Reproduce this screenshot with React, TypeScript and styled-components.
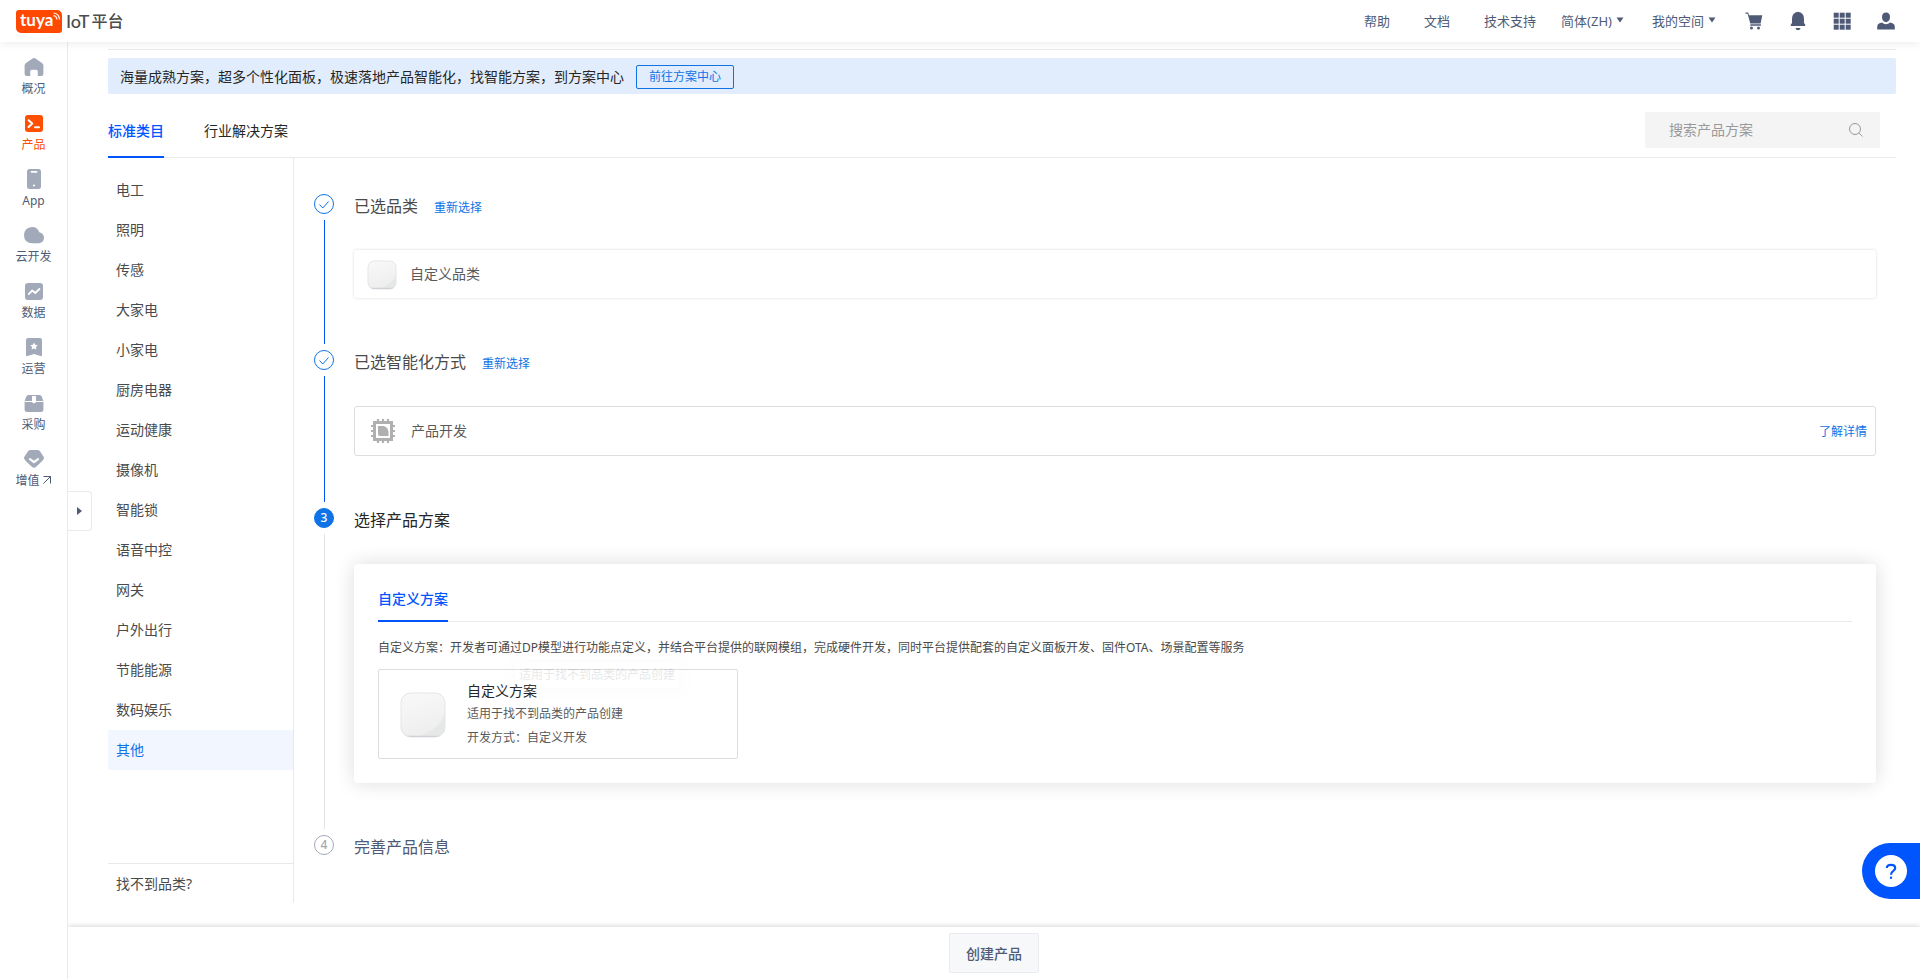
import React from "react";
import styled, { createGlobalStyle } from "styled-components";

const GlobalStyle = createGlobalStyle`
  *, *::before, *::after { box-sizing: border-box; }
  body {
    margin: 0;
    background: #fff;
    color: #4a4a4a;
    font-family: "Noto Sans", "Noto Sans CJK SC", sans-serif;
    font-size: 14px;
  }
  a { color: inherit; text-decoration: none; }
  button { font-family: inherit; padding: 0; cursor: pointer; }
  h1, h2, p, ul, ol { margin: 0; padding: 0; font-weight: 400; list-style: none; }
  svg { display: block; flex: none; }
`;

const blue = "#0055ff";
const link = "#0f73e6";
const slate = "#4f5b76";
const line = "#e9e9eb";

const Page = styled.div`
  min-height: 100vh;
  display: flex;
  flex-direction: column;
`;

/* ---------- header ---------- */

const Header = styled.header`
  position: sticky;
  top: 0;
  z-index: 4;
  height: 42px;
  flex: none;
  display: flex;
  align-items: center;
  justify-content: space-between;
  padding: 0 24px 0 16px;
  background: #fff;
  box-shadow: 0 2px 8px rgba(0, 0, 0, 0.07);
`;

const Logo = styled.a`
  display: flex;
  align-items: center;
  gap: 4px;
  color: #4c4c4c;
  font-size: 16px;
  line-height: 24px;
`;

const LogoMark = styled.span`
  position: relative;
  width: 46px;
  height: 23px;
  padding-left: 4px;
  border-radius: 3px 5px 3px 5px;
  background: #ff4800;
  color: #fff;
  font-family: Lato, sans-serif;
  font-weight: 700;
  font-size: 17px;
  line-height: 20px;

  svg {
    position: absolute;
    top: 2px;
    right: 1px;
  }
`;

const LogoText = styled.span`
  display: flex;
  gap: 2px;
  font-weight: 500;
`;

const LogoLatin = styled.span`
  font-family: Lato, sans-serif;
  font-size: 18px;
`;

const HeaderNav = styled.nav`
  display: flex;
  align-items: center;
  color: ${slate};
  font-size: 13px;
`;

const HeaderLinks = styled.div`
  display: flex;
  gap: 34px;
  margin-right: 25px;
  padding-bottom: 2px;
`;

const HeaderMenus = styled.div`
  display: flex;
  gap: 28px;
  margin-right: 28px;
  padding-bottom: 2px;
`;

const MenuButton = styled.button`
  display: flex;
  align-items: center;
  gap: 4px;
  border: 0;
  background: none;
  color: inherit;
  font-size: 13px;
`;

const HeaderIcons = styled.div`
  display: flex;
  gap: 24px;
`;

const IconButton = styled.button`
  border: 0;
  background: none;
  color: ${slate};
`;

/* ---------- side navigation ---------- */

const Body = styled.div`
  flex: 1;
  display: flex;
`;

const Side = styled.nav`
  position: relative;
  z-index: 3;
  width: 68px;
  flex: none;
  padding-top: 7px;
  border-right: 1px solid #e8e9f1;
  background: #fff;
`;

const SideItem = styled.a<{ $active?: boolean }>`
  display: flex;
  flex-direction: column;
  align-items: center;
  gap: 4px;
  padding: 8px 0;
  font-size: 12px;
  line-height: 16px;
  color: ${(p) => (p.$active ? "#ff4f00" : slate)};

  > svg { color: ${(p) => (p.$active ? "#ff4f00" : "#a2a9b8")}; }
`;

const SideLabel = styled.span`
  display: flex;
  align-items: center;
  gap: 2px;
`;

const Main = styled.main`
  flex: 1;
  min-width: 0;
  display: flex;
  flex-direction: column;
`;

const Expander = styled.button`
  position: fixed;
  z-index: 1;
  left: 68px;
  top: 491px;
  width: 24px;
  height: 40px;
  display: flex;
  align-items: center;
  justify-content: center;
  border: 1px solid #e8e9f1;
  border-left: 0;
  border-radius: 0 4px 4px 0;
  background: #fff;
  color: ${slate};
`;

const Content = styled.div`
  flex: 1;
  display: flex;
  flex-direction: column;
  margin: 7px 24px 24px 40px;
  padding-top: 8px;
  border-top: 1px solid ${line};
`;

const Banner = styled.div`
  height: 36px;
  display: flex;
  align-items: center;
  gap: 12px;
  padding: 0 12px;
  border-radius: 2px;
  background: #e1edfc;
  color: #262626;
`;

const BannerButton = styled.button`
  height: 24px;
  margin-top: 2px;
  padding: 0 12px;
  border: 1px solid ${link};
  border-radius: 2px;
  background: none;
  color: ${link};
  font-size: 12px;
  line-height: 20px;
`;

const TabBar = styled.div`
  height: 64px;
  display: flex;
  align-items: flex-end;
  justify-content: space-between;
  border-bottom: 1px solid ${line};
`;

const Tabs = styled.div`
  display: flex;
  gap: 40px;
`;

const Tab = styled.button<{ $active?: boolean; $compact?: boolean }>`
  margin-bottom: -1px;
  border: 0;
  border-bottom: 2px solid ${(p) => (p.$active ? blue : "transparent")};
  background: none;
  color: ${(p) => (p.$active ? blue : "#262626")};
  font-size: 14px;
  font-weight: ${(p) => (p.$active ? 500 : 400)};
  line-height: ${(p) => (p.$compact ? 42 : 50)}px;
`;

const Search = styled.label`
  width: 235px;
  height: 36px;
  display: flex;
  align-items: center;
  margin: 0 16px 9px 0;
  padding: 0 16px 0 24px;
  border-radius: 2px;
  background: #f4f4f4;
  color: #999;
`;

const SearchInput = styled.input`
  flex: 1;
  min-width: 0;
  padding: 0 0 2px;
  border: 0;
  outline: 0;
  background: none;
  color: #333;
  font: inherit;

  &::placeholder { color: #999; opacity: 1; }
`;

/* ---------- categories ---------- */

const Workspace = styled.div`
  flex: 1;
  display: flex;
`;

const Categories = styled.aside`
  width: 186px;
  flex: none;
  display: flex;
  flex-direction: column;
  justify-content: space-between;
  padding-top: 12px;
  border-right: 1px solid ${line};
`;

const Category = styled.a<{ $active?: boolean }>`
  display: block;
  padding: 0 8px;
  line-height: 40px;
  color: ${(p) => (p.$active ? link : "#4a4a4a")};
  background: ${(p) => (p.$active ? "#f2f7ff" : "none")};
`;

const Missing = styled.a`
  height: 40px;
  padding: 0 8px;
  border-top: 1px solid ${line};
  line-height: 40px;
`;

/* ---------- steps ---------- */

const Steps = styled.ol`
  flex: 1;
  min-width: 0;
  && { padding: 36px 20px 0; }
`;

const StepRow = styled.li`
  display: flex;
  gap: 20px;
`;

const Rail = styled.div`
  width: 20px;
  flex: none;
  display: flex;
  flex-direction: column;
`;

type Status = "done" | "current" | "waiting";

const Dot = styled.span<{ $status: Status }>`
  width: 20px;
  height: 20px;
  display: flex;
  align-items: center;
  justify-content: center;
  border: 1px solid ${(p) => (p.$status === "waiting" ? "#a2a9b8" : link)};
  border-radius: 50%;
  background: ${(p) => (p.$status === "current" ? link : "#fff")};
  color: ${(p) => ({ done: link, current: "#fff", waiting: "#a2a9b8" })[p.$status]};
  font-size: 12px;
  font-weight: 500;
  line-height: 18px;
`;

const Connector = styled.span<{ $done: boolean }>`
  flex: 1;
  width: 1px;
  margin: 6px 0 6px 10px;
  background: ${(p) => (p.$done ? blue : "#e4e4e6")};
`;

const StepBody = styled.div<{ $last: boolean }>`
  flex: 1;
  min-width: 0;
  padding-bottom: ${(p) => (p.$last ? 0 : 52)}px;
`;

const StepHead = styled.div<{ $last: boolean }>`
  height: 26px;
  display: flex;
  align-items: baseline;
  gap: 16px;
  margin-bottom: ${(p) => (p.$last ? 0 : 30)}px;
  line-height: 24px;
`;

const StepTitle = styled.h2<{ $status: Status }>`
  font-size: 16px;
  color: ${(p) => ({ done: "#4a4a4a", current: "#262626", waiting: slate })[p.$status]};
`;

const TextLink = styled.a`
  color: ${link};
  font-size: 12px;
`;

const Choice = styled.div<{ $outlined?: boolean }>`
  height: ${(p) => (p.$outlined ? 50 : 48)}px;
  display: flex;
  align-items: center;
  gap: 12px;
  padding: 0 8px 0 12px;
  border: ${(p) => (p.$outlined ? "1px solid #dedede" : "0")};
  border-radius: 3px;
  box-shadow: ${(p) => (p.$outlined ? "none" : "0 0 3px rgba(0, 0, 0, 0.16)")};
`;

const ChoiceName = styled.span`
  flex: 1;
  padding-bottom: 2px;
  color: #5a5a5a;
`;

const Panel = styled.section`
  padding: 0 24px 24px;
  border-radius: 4px;
  background: #fff;
  box-shadow: 0 0 20px rgba(0, 0, 0, 0.14);
`;

const PanelTabs = styled.div`
  height: 58px;
  display: flex;
  align-items: flex-end;
  border-bottom: 1px solid ${line};
`;

const PanelText = styled.p`
  && { padding: 15px 0 10px; }
  color: #4a4a4a;
  font-size: 12px;
  line-height: 22px;
`;

const Solution = styled.button`
  position: relative;
  width: 360px;
  height: 90px;
  display: flex;
  align-items: center;
  gap: 20px;
  padding: 0 20px;
  border: 1px solid #dcdddf;
  border-radius: 2px;
  background: #fff;
  text-align: left;
`;

const SolutionInfo = styled.span`
  display: flex;
  flex-direction: column;
  padding-top: 2px;
  color: #5a5a5a;
  font-size: 12px;
  line-height: 24px;
`;

const SolutionName = styled.span`
  color: #262626;
  font-size: 14px;
  line-height: 22px;
`;

const FadingTip = styled.span`
  position: absolute;
  left: 136px;
  top: -8px;
  padding: 0 4px;
  border-radius: 2px;
  background: #fff;
  box-shadow: 0 2px 12px rgba(0, 0, 0, 0.15);
  color: #222;
  font-size: 12px;
  line-height: 26px;
  opacity: 0.1;
`;

/* ---------- footer ---------- */

const Footer = styled.footer`
  position: sticky;
  bottom: 0;
  z-index: 2;
  height: 52px;
  flex: none;
  display: flex;
  align-items: center;
  justify-content: center;
  background: #fff;
  box-shadow: 0 -1px 5px rgba(0, 0, 0, 0.16);
`;

const CreateButton = styled.button`
  width: 90px;
  height: 40px;
  border: 1px solid #e9ebef;
  border-radius: 2px;
  background: #f7f8fa;
  color: ${slate};
  font-size: 14px;
  font-weight: 500;
`;

const HelpButton = styled.button`
  position: fixed;
  z-index: 4;
  right: 0;
  bottom: 80px;
  width: 58px;
  height: 56px;
  padding-left: 13px;
  border: 0;
  border-radius: 28px 0 0 28px;
  background: ${blue};
`;

/* ---------- icons ---------- */

const Glyph = ({ children, size = 20 }: { children: React.ReactNode; size?: number }) => (
  <svg width={size} height={size} viewBox={`0 0 ${size} ${size}`} fill="currentColor" aria-hidden="true">
    {children}
  </svg>
);

const stroke = { fill: "none", stroke: "#fff", strokeWidth: 1.8, strokeLinecap: "round", strokeLinejoin: "round" } as const;

const Caret = () => (
  <svg width="8" height="6" viewBox="0 0 8 6" fill="currentColor" aria-hidden="true">
    <path d="M.5 .5h7L4 5.5z" />
  </svg>
);

const HomeIcon = () => (
  <Glyph>
    <path d="M8.6 1.5Q10 .6 11.4 1.5l6.6 4.4q1.4 1 1.4 2.6v8.2q0 2.300-2.300 2.300h-3.300v-4.400q0-1.800-1.800-1.800H8q-1.800 0-1.800 1.800V19H2.900Q.6 19 .6 16.700V8.500q0-1.600 1.400-2.600z" />
  </Glyph>
);
const ProductIcon = () => (
  <Glyph>
    <rect x="1" y="2" width="18" height="17" rx="3" />
    <path {...stroke} strokeWidth="2" d="M4.600 7.200 8.200 10.600 4.600 14M11 14.200h4" />
  </Glyph>
);
const PhoneIcon = () => (
  <Glyph>
    <rect x="3" y="0" width="14" height="20" rx="2.500" />
    <path {...stroke} d="M7.500 2.800h5" />
    <circle cx="10" cy="16.500" r="1.100" fill="#fff" />
  </Glyph>
);
const CloudIcon = () => (
  <Glyph>
    <path d="M8 2Q13.500 2 15.300 7.200 20 8.300 20 13q-.3 5-5.300 5.300H8.500Q0 18 0 10 .5 2.500 8 2z" />
  </Glyph>
);
const DataIcon = () => (
  <Glyph>
    <rect x="1" y="2" width="18" height="17" rx="3" />
    <path {...stroke} d="M4.800 13 8.300 9.500 11.300 12 15.400 8" />
  </Glyph>
);
const OpsIcon = () => (
  <Glyph>
    <path d="M4.200 1h11.600q2.200 0 2.200 2.200V18q0 1.500-1.500 1L10 17l-6.500 2Q2 19.500 2 18V3.200Q2 1 4.200 1z" />
    <path fill="#fff" d="M10 5.400l1.200 2.400 2.600.4-1.900 1.800.5 2.600L10 11.400l-2.400 1.200.5-2.600-1.900-1.800 2.600-.4z" />
  </Glyph>
);
const BoxIcon = () => (
  <Glyph>
    <path d="M4.500 2h11q1.500 0 2.200 1.500l1.700 4.600V16.500q0 2.500-2.500 2.500H3.100Q.6 19 .6 16.500V8.100L2.300 3.500Q3 2 4.500 2z" />
    <path stroke="#fff" strokeWidth="1" d="M.6 8.500h18.800" />
    <path fill="#fff" d="M8 3h4v6.200l-2 1.300-2-1.300z" />
  </Glyph>
);
const ValueIcon = () => (
  <Glyph>
    <path d="M6.500 1h7q1.400 0 2.300 1l3.800 5.800q.8 1.400-.2 2.700-1 1.300-2.800 3l-4.400 4.300q-2.200 1.700-4.400 0L3.400 13.500Q1.600 11.800.6 10.500-.4 9.200.4 7.800L4.200 2Q5.100 1 6.500 1z" />
    <path {...stroke} strokeWidth="2.200" d="M6 10.200l4 3 4-3" />
  </Glyph>
);
const OutArrow = () => (
  <svg width="10" height="12" viewBox="0 0 10 12" fill="none" stroke="currentColor" aria-hidden="true">
    <path d="M1.500 1.500h7v7M8.500 1.500l-7 7" />
  </svg>
);

const CartIcon = () => (
  <Glyph>
    <path d="M1.500 1.500h2.700l.8 2.800h13.300l-1.700 8.200H6.300L3.600 2.800H1.500zM6.300 13.300h10.600v1.400H6.300z" />
    <circle cx="7.500" cy="17" r="1.500" />
    <circle cx="14.500" cy="17" r="1.500" />
  </Glyph>
);
const BellIcon = () => (
  <Glyph>
    <path d="M10 .8Q16 1.500 16 8v4l1.200 1.400v1.600H2.800v-1.600L4 12V8Q4 1.500 10 .8zM7.400 17h5.200q-.6 2.200-2.600 2.200T7.400 17z" />
  </Glyph>
);
const GridIcon = () => (
  <Glyph>
    {[2, 8, 14].map((y) => [2, 8, 14].map((x) => <rect key={`${x}-${y}`} x={x - 0.3} y={y - 0.3} width="5" height="5" />))}
  </Glyph>
);
const UserIcon = () => (
  <Glyph>
    <path d="M10 1.500q4 0 4 4.500t-4 5.200Q6 10.500 6 6t4-4.500zM1.200 18.500v-3q0-2.500 2.300-3.300l2.500-.6q1.500 1.700 4 1.700t4-1.700l2.500.6q2.300.8 2.300 3.300v3z" />
  </Glyph>
);

const SearchIcon = () => (
  <svg width="16" height="16" viewBox="0 0 16 16" fill="none" stroke="currentColor" aria-hidden="true">
    <circle cx="7" cy="7" r="5.500" />
    <path d="M11 11l3.500 3.500" />
  </svg>
);

const Check = () => (
  <svg width="12" height="12" viewBox="0 0 12 12" fill="none" stroke="currentColor" aria-hidden="true">
    <path d="M1.500 6.500 4.800 10 10.500 3.500" />
  </svg>
);

const TileIcon = ({ size, inset, id }: { size: number; inset: number; id: string }) => {
  const side = size - inset * 2;
  const y = inset + 1;
  return (
    <svg width={size} height={size} viewBox={`0 0 ${size} ${size}`} aria-hidden="true">
      <defs>
        <linearGradient id={id} x1="0" y1="0" x2="0.300" y2="1">
          <stop offset="0" stopColor="#f9f9f9" />
          <stop offset="1" stopColor="#eeeeef" />
        </linearGradient>
        <clipPath id={`${id}-clip`}>
          <rect x={inset} y={y} width={side} height={side} rx={side / 4.5} />
        </clipPath>
      </defs>
      <rect x={inset} y={y} width={side} height={side} rx={side / 4.5} fill={`url(#${id})`} stroke="#e4e5e8" />
      <g clipPath={`url(#${id}-clip)`}>
        <path
          d={`M${size} ${size * 0.35}Q${size * 0.9} ${size * 0.85} ${size * 0.3} ${size}H${size}z`}
          fill="#e3e6e6"
          opacity="0.8"
        />
        <path d={`M0 ${size - inset + 0.5}H${size}`} stroke="#cfd1d6" strokeWidth="1.5" />
      </g>
    </svg>
  );
};

const ChipIcon = () => (
  <svg width="32" height="32" viewBox="0 0 32 32" aria-hidden="true">
    <path d="M11 4v3M16 4v3M21 4v3M11 25v3M16 25v3M21 25v3M4 11h3M4 16h3M4 21h3M25 11h3M25 16h3M25 21h3" stroke="#b0b0b0" strokeWidth="2.200" />
    <rect x="7.500" y="7.500" width="17" height="17" fill="#fff" stroke="#b0b0b0" strokeWidth="3" />
    <path d="M11 11h5.500q4.500 1 5 6v4H13q-2 0-2-2z" fill="#b0b0b0" />
  </svg>
);

const HelpIcon = () => (
  <svg width="32" height="32" viewBox="0 0 32 32" aria-hidden="true">
    <circle cx="16" cy="16" r="16" fill="#fff" />
    <path d="M11.800 13q0-3.200 4.200-3.200 4.200 0 4.200 3.200 0 1.600-2.100 3.100Q16 17.500 16 19.800" fill="none" stroke={blue} strokeWidth="2.200" />
    <rect x="14.900" y="21.600" width="2.200" height="2.200" fill={blue} />
  </svg>
);

/* ---------- data ---------- */

const sideItems = [
  { label: "概况", Icon: HomeIcon },
  { label: "产品", Icon: ProductIcon, active: true },
  { label: "App", Icon: PhoneIcon },
  { label: "云开发", Icon: CloudIcon },
  { label: "数据", Icon: DataIcon },
  { label: "运营", Icon: OpsIcon },
  { label: "采购", Icon: BoxIcon },
  { label: "增值", Icon: ValueIcon, external: true },
];

const categories = [
  "电工", "照明", "传感", "大家电", "小家电", "厨房电器", "运动健康", "摄像机",
  "智能锁", "语音中控", "网关", "户外出行", "节能能源", "数码娱乐", "其他",
];

const headerIcons = [
  { name: "购物车", Icon: CartIcon },
  { name: "消息", Icon: BellIcon },
  { name: "应用", Icon: GridIcon },
  { name: "账号", Icon: UserIcon },
];

interface StepProps {
  index: number;
  title: string;
  status: Status;
  reselect?: boolean;
  last?: boolean;
  children?: React.ReactNode;
}

const Step = ({ index, title, status, reselect, last = false, children }: StepProps) => (
  <StepRow>
    <Rail>
      <Dot $status={status}>{status === "done" ? <Check /> : index}</Dot>
      {!last && <Connector $done={status === "done"} />}
    </Rail>
    <StepBody $last={last}>
      <StepHead $last={last}>
        <StepTitle $status={status}>{title}</StepTitle>
        {reselect && <TextLink href="#">重新选择</TextLink>}
      </StepHead>
      {children}
    </StepBody>
  </StepRow>
);

export default function App() {
  return (
    <Page>
      <GlobalStyle />
      <Header>
        <Logo href="#">
          <LogoMark>
            tuya
            <svg width="9" height="9" viewBox="0 0 9 9" fill="none" stroke="#fff" strokeWidth="1.200" aria-hidden="true">
              <path d="M1.500 1Q7 1.500 7.500 7.500M1.500 3.600Q4.600 4 5 7.500" />
            </svg>
          </LogoMark>
          <LogoText>
            <LogoLatin>IoT</LogoLatin>
            <span>平台</span>
          </LogoText>
        </Logo>
        <HeaderNav>
          <HeaderLinks>
            <a href="#">帮助</a>
            <a href="#">文档</a>
            <a href="#">技术支持</a>
          </HeaderLinks>
          <HeaderMenus>
            <MenuButton>简体(ZH)<Caret /></MenuButton>
            <MenuButton>我的空间<Caret /></MenuButton>
          </HeaderMenus>
          <HeaderIcons>
            {headerIcons.map(({ name, Icon }) => (
              <IconButton key={name} aria-label={name}><Icon /></IconButton>
            ))}
          </HeaderIcons>
        </HeaderNav>
      </Header>

      <Body>
        <Side>
          {sideItems.map(({ label, Icon, active, external }) => (
            <SideItem key={label} href="#" $active={active}>
              <Icon />
              <SideLabel>{label}{external && <OutArrow />}</SideLabel>
            </SideItem>
          ))}
        </Side>
        <Expander aria-label="展开">
          <svg width="5" height="8" viewBox="0 0 5 8" fill="currentColor" aria-hidden="true"><path d="M0 0l5 4-5 4z" /></svg>
        </Expander>

        <Main>
          <Content>
            <Banner>
              <span>海量成熟方案，超多个性化面板，极速落地产品智能化，找智能方案，到方案中心</span>
              <BannerButton>前往方案中心</BannerButton>
            </Banner>
            <TabBar>
              <Tabs>
                <Tab $active>标准类目</Tab>
                <Tab>行业解决方案</Tab>
              </Tabs>
              <Search>
                <SearchInput type="text" placeholder="搜索产品方案" aria-label="搜索产品方案" />
                <SearchIcon />
              </Search>
            </TabBar>

            <Workspace>
              <Categories>
                <ul>
                  {categories.map((name) => (
                    <li key={name}><Category href="#" $active={name === "其他"}>{name}</Category></li>
                  ))}
                </ul>
                <Missing href="#">找不到品类?</Missing>
              </Categories>

              <Steps>
                <Step index={1} title="已选品类" status="done" reselect>
                  <Choice>
                    <TileIcon size={32} inset={2} id="tile-small" />
                    <ChoiceName>自定义品类</ChoiceName>
                  </Choice>
                </Step>
                <Step index={2} title="已选智能化方式" status="done" reselect>
                  <Choice $outlined>
                    <ChipIcon />
                    <ChoiceName>产品开发</ChoiceName>
                    <TextLink href="#">了解详情</TextLink>
                  </Choice>
                </Step>
                <Step index={3} title="选择产品方案" status="current">
                  <Panel>
                    <PanelTabs><Tab $active $compact>自定义方案</Tab></PanelTabs>
                    <PanelText>
                      自定义方案：开发者可通过DP模型进行功能点定义，并结合平台提供的联网模组，完成硬件开发，同时平台提供配套的自定义面板开发、固件OTA、场景配置等服务
                    </PanelText>
                    <Solution>
                      <TileIcon size={48} inset={2} id="tile-large" />
                      <SolutionInfo>
                        <SolutionName>自定义方案</SolutionName>
                        <span>适用于找不到品类的产品创建</span>
                        <span>开发方式：自定义开发</span>
                      </SolutionInfo>
                      <FadingTip role="tooltip">适用于找不到品类的产品创建</FadingTip>
                    </Solution>
                  </Panel>
                </Step>
                <Step index={4} title="完善产品信息" status="waiting" last />
              </Steps>
            </Workspace>
          </Content>
          <Footer><CreateButton>创建产品</CreateButton></Footer>
        </Main>
      </Body>
      <HelpButton aria-label="帮助中心"><HelpIcon /></HelpButton>
    </Page>
  );
}
